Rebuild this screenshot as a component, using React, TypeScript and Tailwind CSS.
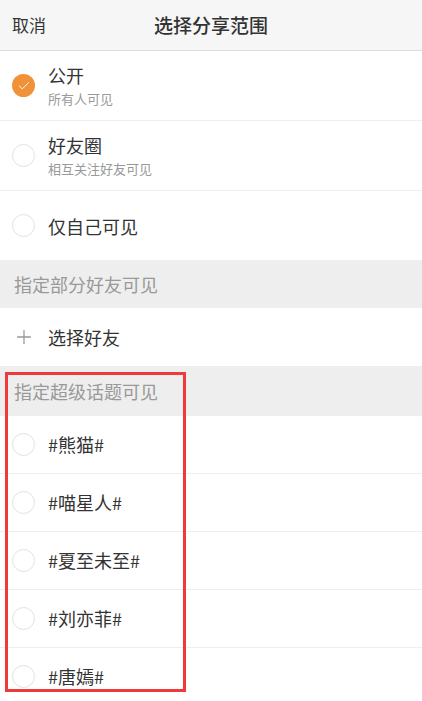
import { Check, Plus } from 'lucide-react';

const font = { fontFamily: '"Noto Sans CJK SC", "Noto Sans", sans-serif' };

const topics = ['#熊猫#', '#喵星人#', '#夏至未至#', '#刘亦菲#', '#唐嫣#'];

function Radio({ checked }: { checked?: boolean }) {
    if (checked) {
        return (
            <span className="flex items-center justify-center w-[23px] h-[23px] rounded-full bg-[#f09237] shrink-0">
                <Check size={14} strokeWidth={1.6} className="text-white" />
            </span>
        );
    }
    return <span className="w-[23px] h-[23px] rounded-full border border-[#e2e2e2] shrink-0" />;
}

function ScopeRow({ title, sub, checked }: { title: string; sub?: string; checked?: boolean }) {
    return (
        <div className="flex items-center h-[70px] border-b border-[#eeeeee] pl-3">
            <Radio checked={checked} />
            <div className="ml-[13px] flex flex-col">
                <span className="text-[18px] leading-[24px] text-[#333333]">{title}</span>
                {sub && <span className="text-[13px] leading-[18px] mt-[3px] text-[#999999]">{sub}</span>}
            </div>
        </div>
    );
}

export default function App() {
    return (
        <main className="relative w-[422px] h-[701px] overflow-hidden bg-white" style={font}>
            <header className="relative flex items-center h-[51px] bg-[#f6f6f6] border-b border-[#dddddd] px-3">
                <span className="text-[17px] text-[#333333]">取消</span>
                <h1 className="absolute left-0 right-0 text-center text-[19px] font-medium text-[#333333] pointer-events-none">
                    选择分享范围
                </h1>
            </header>

            <ScopeRow title="公开" sub="所有人可见" checked />
            <ScopeRow title="好友圈" sub="相互关注好友可见" />
            <ScopeRow title="仅自己可见" />

            <div className="flex items-center h-[47px] bg-[#eeeeee] pl-[14px] text-[18px] text-[#999999]">
                指定部分好友可见
            </div>
            <div className="flex items-center h-[58px] pl-[13px]">
                <Plus size={22} strokeWidth={1.4} className="text-[#999999]" />
                <span className="ml-[13px] text-[18px] text-[#333333]">选择好友</span>
            </div>

            <div className="flex items-center h-[50px] bg-[#eeeeee] pl-[14px] text-[18px] text-[#999999]">
                指定超级话题可见
            </div>
            {topics.map((t) => (
                <div key={t} className="flex items-center h-[58px] border-b border-[#eeeeee] pl-3">
                    <Radio />
                    <span className="ml-[13px] text-[18px] text-[#333333]">{t}</span>
                </div>
            ))}

            <div className="absolute left-[5px] top-[372px] w-[181px] h-[320px] border-[3px] border-[#f03a3a] pointer-events-none" />
        </main>
    );
}
